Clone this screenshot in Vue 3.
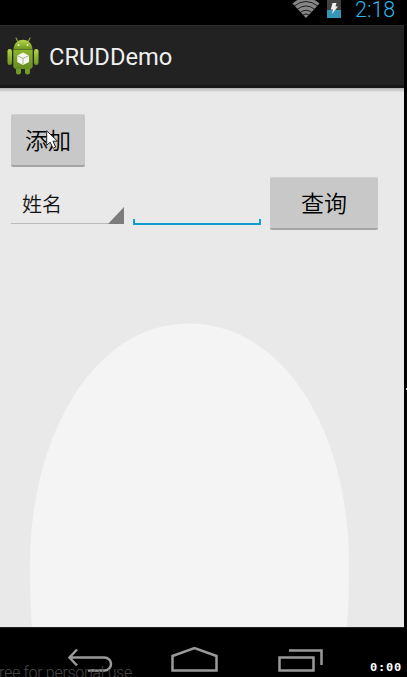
<script setup>
import { ref } from 'vue'

const clock = ref('2:18')
const title = ref('CRUDDemo')
const field = ref('姓名')
const query = ref('')
</script>

<template>
  <div class="stage">
    <div class="screen">
      <div class="status">
        <svg class="wifi" width="28" height="19" viewBox="0 0 28 19">
          <path d="M0.500 3.500Q14 -8 27.500 3.500L14 18Z" fill="#868686" />
          <g fill="none" stroke="#111" stroke-width="0.900">
            <path d="M2 6.200Q14 -3.200 26 6.200" />
            <path d="M5 9.500Q14 2.300 23 9.500" />
            <path d="M8 12.700Q14 7.700 20 12.700" />
            <path d="M10.500 15.200Q14 12.500 17.500 15.200" />
          </g>
        </svg>
        <svg class="battery" width="14" height="18" viewBox="0 0 14 18">
          <rect width="14" height="18" fill="#424242" />
          <rect y="10" width="14" height="8" fill="#3795b8" />
          <path d="M5.500 3H9.500L8.500 6.500H11L5 14L6 9.500H3.800Z" fill="#f0f0f0" />
        </svg>
        <span class="clock">{{ clock }}</span>
      </div>

      <header class="bar">
        <svg class="robot" width="32" height="38" viewBox="0 0 32 38">
          <defs>
            <linearGradient id="skin" x1="0" y1="0" x2="0" y2="1">
              <stop offset="0" stop-color="#b4d645" />
              <stop offset="1" stop-color="#6d9522" />
            </linearGradient>
            <linearGradient id="torso" x1="0" y1="0" x2="0" y2="1">
              <stop offset="0" stop-color="#8eb52c" />
              <stop offset="1" stop-color="#648b22" />
            </linearGradient>
          </defs>
          <path d="M10.500 4L9 1M21.500 4L23 1" stroke="#8eaf38" stroke-width="1.100" stroke-linecap="round" />
          <path d="M6.500 12.500C7 -0.500 25 -0.500 25.500 12.500Z" fill="url(#skin)" />
          <circle cx="11.500" cy="8" r="1" fill="#edf4c9" />
          <circle cx="20.500" cy="8" r="1" fill="#edf4c9" />
          <rect x="0.500" y="12" width="4.500" height="16" rx="2.200" fill="url(#skin)" />
          <rect x="27" y="12" width="4.500" height="16" rx="2.200" fill="url(#skin)" />
          <rect x="9" y="27" width="5" height="10.500" rx="2.200" fill="#719a27" />
          <rect x="18" y="27" width="5" height="10.500" rx="2.200" fill="#719a27" />
          <path d="M6.300 12.800H25.700V29Q25.700 32 22.500 32H9.500Q6.300 32 6.300 29Z" fill="url(#torso)" />
          <path d="M16 15.500L22 18.500V25L16 28L10.300 25V18.500Z" fill="#f5f7ee" />
          <path d="M10.500 18.700L16 21.500L21.800 18.700M16 21.500V27.500" fill="none" stroke="#a5b194" stroke-width="1" />
        </svg>
        <h1 class="title">{{ title }}</h1>
      </header>

      <main class="content">
        <svg class="halo" width="404" height="539" viewBox="0 88 404 539">
          <path d="M189 323.500C93 323.500 30 437 30 565Q30 602 32 627H347Q349 602 349 565C349 430 283 323.500 189 323.500Z" fill="#f4f4f4" />
        </svg>
        <button class="btn add">添加</button>
        <div class="row">
          <div class="spinner">
            <span>{{ field }}</span>
            <svg class="corner" width="16" height="17" viewBox="0 0 16 17">
              <path d="M16 0V17H0Z" fill="#7c7c7c" />
            </svg>
          </div>
          <div class="entry">
            <input v-model="query" class="input" type="text" />
            <div class="line"></div>
          </div>
          <button class="btn find">查询</button>
        </div>
        <svg class="pointer" width="13" height="20" viewBox="0 0 13 20">
          <path d="M0.700 0.800V15.200L4.200 12.200L7 18.300L9.700 17L7 11.200H11.500Z" fill="#fff" stroke="#222" stroke-width="1" />
        </svg>
      </main>

      <nav class="nav">
        <svg width="404" height="49" viewBox="0 0 404 49" fill="none" stroke="#999" stroke-width="2.500">
          <path d="M77 21.500L69.500 29.500L77 37.500M69.500 29.500H104.500A6 6 0 0 1 104.500 42.500H88" />
          <path d="M172.500 42.500V28L194.500 20L216.500 28V42.500Z" />
          <path d="M279.500 29.500H313.500V42.500H279.500ZM289 22.500H321.500V37" />
        </svg>
        <span class="watermark">ree for personal use</span>
      </nav>
    </div>
    <i class="speck"></i>
    <span class="timer">0:00</span>
  </div>
</template>

<style>
body {
  margin: 0;
  background: #000;
}
</style>

<style scoped>
.stage {
  position: relative;
  width: 407px;
  height: 677px;
  overflow: hidden;
  background: #000;
  font-family: Roboto, "Noto Sans CJK SC", sans-serif;
}
.screen {
  display: flex;
  flex-direction: column;
  width: 404px;
  height: 677px;
}
.status {
  box-sizing: border-box;
  display: flex;
  height: 25px;
  padding-left: 292px;
}
.battery {
  margin-left: 7px;
}
.clock {
  margin-left: 14px;
  font-size: 21.500px;
  line-height: 19px;
  font-weight: 350;
  color: #33b5e5;
}
.bar {
  box-sizing: border-box;
  display: flex;
  align-items: center;
  height: 63px;
  padding-left: 7px;
  background: #222;
  border-top: 1px solid #2d2d2d;
  border-bottom: 3px solid #171717;
}
.title {
  margin: 2px 0 0 10px;
  font-size: 23.700px;
  line-height: 30px;
  font-weight: 400;
  color: #f0f0f0;
}
.content {
  position: relative;
  box-sizing: border-box;
  height: 539px;
  padding: 26px 0 0 11px;
  background: linear-gradient(#aaa 0, #c5c5c5 1px, #d2d2d2 3px, #e9e9e9 4px);
}
.halo {
  position: absolute;
  left: 0;
  top: 0;
}
.btn {
  position: relative;
  display: block;
  box-sizing: border-box;
  height: 53px;
  margin: 0;
  padding: 0 0 2px;
  border: 0;
  border-top: 1px solid #d0d0d0;
  border-bottom: 2px solid #a5a5a5;
  border-radius: 2px;
  background: #c8c8c8;
  color: #000;
  font: 350 23px/48px "Noto Sans CJK SC", sans-serif;
}
.add {
  width: 74px;
}
.find {
  width: 108px;
  margin-left: 9px;
}
.row {
  position: relative;
  display: flex;
  align-items: flex-start;
  margin-top: 10px;
}
.spinner {
  box-sizing: border-box;
  display: flex;
  justify-content: space-between;
  align-items: flex-end;
  width: 113px;
  height: 47px;
  padding-left: 11px;
  border-bottom: 1px solid #bbb;
  font: 350 20px/38px "Noto Sans CJK SC", sans-serif;
  color: #111;
}
.corner {
  margin-bottom: -1px;
}
.entry {
  width: 128px;
  height: 48px;
  margin-left: 9px;
}
.input {
  box-sizing: border-box;
  display: block;
  width: 128px;
  height: 42px;
  padding: 0 6px;
  border: 0;
  outline: 0;
  background: transparent;
  font-size: 22px;
}
.line {
  box-sizing: border-box;
  height: 6px;
  border: 2px solid #129fd2;
  border-top: 0;
}
.pointer {
  position: absolute;
  left: 46px;
  top: 42px;
}
.nav {
  position: relative;
  height: 50px;
  border-top: 1px solid #222;
  box-sizing: border-box;
}
.nav svg {
  display: block;
}
.watermark {
  position: absolute;
  left: -1px;
  top: 35px;
  font-size: 16px;
  line-height: 20px;
  font-weight: 300;
  letter-spacing: -0.300px;
  white-space: nowrap;
  color: #484848;
}
.speck {
  position: absolute;
  left: 406px;
  top: 388px;
  width: 1px;
  height: 2px;
  background: #ccc;
}
.timer {
  position: absolute;
  left: 370px;
  top: 662px;
  font: 700 12px/13px "DejaVu Sans Mono", monospace;
  letter-spacing: 0.800px;
  transform: scaleY(0.8);
  color: #fff;
}
</style>
